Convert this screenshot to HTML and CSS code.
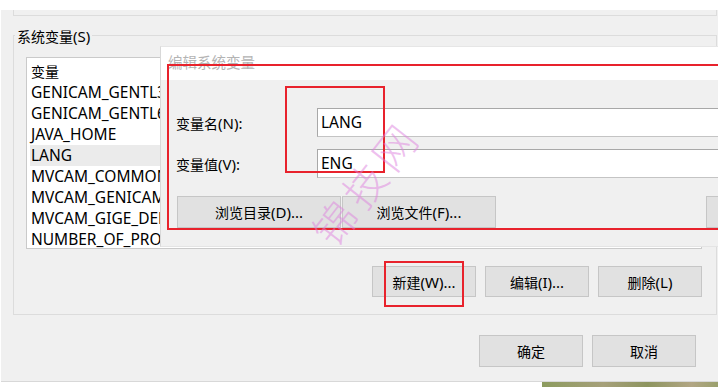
FILE: index.html
```html
<!DOCTYPE html>
<html lang="zh-CN">
<head>
<meta charset="utf-8">
<title>系统变量</title>
<link rel="stylesheet" href="styles.css">
</head>
<body>
<div class="screen">
  <div class="window">
    <div class="prev-group"></div>
    <div class="group">
      <span class="group-title">系统变量<span class="lat">(S)</span></span>
      <div class="listbox">
        <div class="row head">变量</div>
        <div class="row">GENICAM_GENTL32_PATH</div>
        <div class="row">GENICAM_GENTL64_PATH</div>
        <div class="row">JAVA_HOME</div>
        <div class="row selected">LANG</div>
        <div class="row">MVCAM_COMMON_RUNENV</div>
        <div class="row">MVCAM_GENICAM_CLPROTOCOL</div>
        <div class="row">MVCAM_GIGE_DEBUG</div>
        <div class="row">NUMBER_OF_PROCESSORS</div>
      </div>
      <div class="btn-row">
        <button class="btn">新建<span class="lat">(W)...</span></button>
        <button class="btn">编辑<span class="lat">(I)...</span></button>
        <button class="btn">删除<span class="lat">(L)</span></button>
      </div>
    </div>
    <div class="dlg-row">
      <button class="btn btn-tall">确定</button>
      <button class="btn btn-tall">取消</button>
    </div>
  </div>
  <div class="footer">
    <div class="footer-blank"></div>
    <div class="footer-desktop"></div>
  </div>

  <div class="dialog">
    <div class="dialog-title">编辑系统变量</div>
    <div class="dialog-body">
      <div class="field">
        <span class="field-label">变量名<span class="lat">(N):</span></span>
        <div class="field-input">LANG</div>
      </div>
      <div class="field">
        <span class="field-label">变量值<span class="lat">(V):</span></span>
        <div class="field-input">ENG</div>
      </div>
      <div class="browse-row">
        <button class="btn browse-dir">浏览目录<span class="lat">(D)...</span></button>
        <button class="btn browse-file">浏览文件<span class="lat">(F)...</span></button>
        <button class="btn browse-more"></button>
      </div>
    </div>
  </div>

  <div class="mark mark-big"></div>
  <div class="mark mark-small"></div>
  <div class="mark mark-new"></div>
  <div class="watermark">锦技网</div>
</div>
</body>
</html>
```

FILE: styles.css
```css
* { box-sizing: border-box; }
html, body { margin: 0; padding: 0; background: #fff; }
.screen {
  position: relative;
  width: 718px;
  height: 387px;
  overflow: hidden;
  background: #fff;
  font-family: "Noto Sans", "Noto Sans CJK SC", sans-serif;
  font-size: 14px;
  color: #000;
}
.lat { font-size: 15px; }
.window {
  margin: 10px 0 0 1px;
  height: 372px;
  background: #f0f0f0;
  border-bottom: 1px solid #d8d8d8;
  display: flex;
  flex-direction: column;
}
.prev-group {
  flex: none;
  margin-left: 12px;
  width: 704px;
  height: 6px;
  border: 1px solid #dcdcdc;
  border-top: none;
}
.group {
  flex: none;
  margin: 19px 0 0 12px;
  width: 704px;
  border: 1px solid #dcdcdc;
  display: flex;
  flex-direction: column;
  align-items: flex-start;
  padding-bottom: 17px;
}
.group-title {
  margin: -9px 0 0 1px;
  padding: 0 2px;
  line-height: 18px;
  background: #f0f0f0;
}
.listbox {
  flex: none;
  margin: 11px 0 0 12px;
  width: 676px;
  height: 192px;
  background: #fff;
  border: 1px solid #cacaca;
  padding: 3px 0 0 3px;
  overflow: hidden;
}
.row {
  height: 21px;
  line-height: 21px;
  padding-left: 1px;
  white-space: nowrap;
  font-size: 15.5px;
}
.row.head { font-size: 14px; }
.row.selected { background: #ebebeb; }
.btn-row {
  align-self: stretch;
  display: flex;
  justify-content: flex-end;
  gap: 9px;
  margin: 17px 14px 0 0;
}
.btn {
  flex: none;
  font: inherit;
  color: #000;
  width: 104px;
  height: 31px;
  background: #e1e1e1;
  border: 1px solid #c6c6c6;
  border-radius: 0;
  padding: 0;
  margin: 0;
  white-space: nowrap;
}
.btn-tall { height: 32px; }
.dlg-row {
  display: flex;
  justify-content: flex-end;
  gap: 9px;
  margin: 20px 22px 0 0;
}
.footer {
  display: flex;
  height: 6px;
}
.footer-blank { width: 542px; background: #fff; }
.footer-desktop {
  flex: 1;
  background: linear-gradient(90deg, #8c9b5e 0%, #a6a07a 35%, #8d955f 60%, #b2a684 85%, #9aa06c 100%);
}
.dialog {
  position: absolute;
  left: 160px;
  top: 46px;
  width: 570px;
  height: 201px;
  background: #f0f0f0;
  border-left: 1px solid #d8d8d8;
  border-top: 1px solid #e6e6e6;
  border-bottom: 1px solid #e4e4e4;
}
.dialog-title {
  height: 33px;
  background: #fff;
  color: #b4b4b4;
  font-size: 14.5px;
  line-height: 30px;
  padding-left: 7px;
}
.dialog-body {
  padding: 28px 0 0 15px;
  display: flex;
  flex-direction: column;
  gap: 12px;
}
.field {
  display: flex;
  align-items: center;
}
.field-label { flex: none; width: 141px; }
.field-input {
  flex: none;
  width: 450px;
  height: 29px;
  background: #fff;
  border: 1px solid #a8a8a8;
  border-bottom-color: #c4c4c4;
  padding-left: 3px;
  line-height: 26px;
  font-size: 15.5px;
}
.browse-row {
  display: flex;
  margin-top: 6px;
}
.browse-row .btn { height: 32px; }
.browse-dir { width: 164px; margin-left: 1px; }
.browse-file { width: 154px; margin-left: 1px; }
.browse-more { width: 100px; margin-left: 210px; }
.mark {
  position: absolute;
  border: 2px solid #e8222c;
}
.mark-big { left: 167px; top: 64px; width: 560px; height: 166px; }
.mark-small { left: 285px; top: 86px; width: 100px; height: 87px; }
.mark-new { left: 384px; top: 261px; width: 80px; height: 46px; }
.watermark {
  position: absolute;
  left: 290px;
  top: 160px;
  width: 150px;
  text-align: center;
  font-family: "Noto Sans CJK SC", sans-serif;
  font-size: 42px;
  font-weight: 300;
  line-height: 44px;
  letter-spacing: 6px;
  color: rgba(222, 130, 222, 0.5);
  transform: rotate(-52deg);
  white-space: nowrap;
}
```
